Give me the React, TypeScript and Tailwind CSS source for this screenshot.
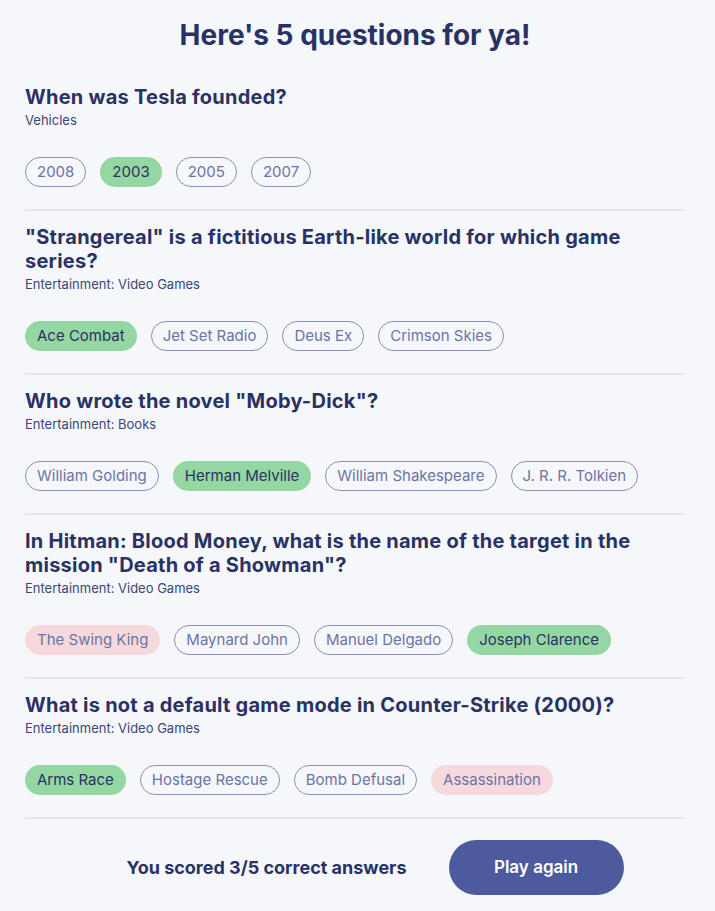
import React from "react";

type Status = "correct" | "wrong" | "idle";

type Question = {
  question: string;
  category: string;
  answers: { text: string; status: Status }[];
};

const QUESTIONS: Question[] = [
  {
    question: "When was Tesla founded?",
    category: "Vehicles",
    answers: [
      { text: "2008", status: "idle" },
      { text: "2003", status: "correct" },
      { text: "2005", status: "idle" },
      { text: "2007", status: "idle" },
    ],
  },
  {
    question: "\"Strangereal\" is a fictitious Earth-like world for which game series?",
    category: "Entertainment: Video Games",
    answers: [
      { text: "Ace Combat", status: "correct" },
      { text: "Jet Set Radio", status: "idle" },
      { text: "Deus Ex", status: "idle" },
      { text: "Crimson Skies", status: "idle" },
    ],
  },
  {
    question: "Who wrote the novel \"Moby-Dick\"?",
    category: "Entertainment: Books",
    answers: [
      { text: "William Golding", status: "idle" },
      { text: "Herman Melville", status: "correct" },
      { text: "William Shakespeare", status: "idle" },
      { text: "J. R. R. Tolkien", status: "idle" },
    ],
  },
  {
    question:
      "In Hitman: Blood Money, what is the name of the target in the mission \"Death of a Showman\"?",
    category: "Entertainment: Video Games",
    answers: [
      { text: "The Swing King", status: "wrong" },
      { text: "Maynard John", status: "idle" },
      { text: "Manuel Delgado", status: "idle" },
      { text: "Joseph Clarence", status: "correct" },
    ],
  },
  {
    question: "What is not a default game mode in Counter-Strike (2000)?",
    category: "Entertainment: Video Games",
    answers: [
      { text: "Arms Race", status: "correct" },
      { text: "Hostage Rescue", status: "idle" },
      { text: "Bomb Defusal", status: "idle" },
      { text: "Assassination", status: "wrong" },
    ],
  },
];

function Chip({ text, status }: { text: string; status: Status }) {
  if (status === "correct") {
    return (
      <span className="flex h-[30px] items-center rounded-full bg-[#94D7A2] px-[12px] text-[15px] text-[#293264]">
        {text}
      </span>
    );
  }
  if (status === "wrong") {
    return (
      <span className="flex h-[30px] items-center rounded-full bg-[#F6D9DC] px-[12px] text-[15px] text-[#6B74A6]">
        {text}
      </span>
    );
  }
  return (
    <span className="flex h-[30px] items-center rounded-full border border-[#8A90B6] px-[11px] text-[15px] text-[#6B74A6]">
      {text}
    </span>
  );
}

export default function App() {
  return (
    <div className="min-h-screen bg-[#F5F7FB] pl-[25px] pr-[30px] pt-[17px] text-[#293264] [font-family:Inter,'Noto_Sans',sans-serif]">
      <h1 className="text-center text-[28px] font-bold leading-[36px]">
        Here's 5 questions for ya!
      </h1>

      <div className="mt-[18px]">
        {QUESTIONS.map((q) => (
          <section key={q.question} className="border-b-2 border-[#E4E6EC] pb-[22px] pt-[14px]">
            <h2 className="text-[20px] font-bold leading-[24px] tracking-[0.012em]">{q.question}</h2>
            <p className="mt-[4px] text-[13px] leading-[14px] text-[#3C4677]">{q.category}</p>
            <div className="mt-[30px] flex gap-[14px]">
              {q.answers.map((a) => (
                <Chip key={a.text} text={a.text} status={a.status} />
              ))}
            </div>
          </section>
        ))}
      </div>

      <div className="flex items-center justify-center gap-[42px] pl-[40px] pt-[21px]">
        <p className="text-[18px] font-bold">You scored 3/5 correct answers</p>
        <button className="h-[55px] w-[175px] rounded-full bg-[#4D5B9E] text-[17px] font-semibold text-white">
          Play again
        </button>
      </div>
    </div>
  );
}
